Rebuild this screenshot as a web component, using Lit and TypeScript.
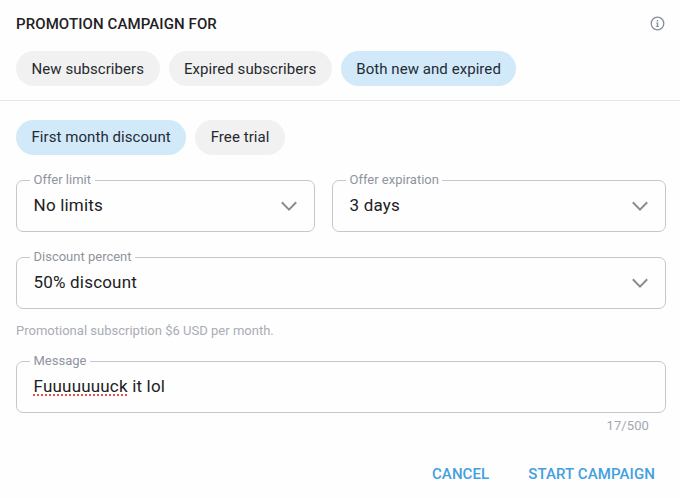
import { LitElement, html, css, svg, nothing } from "lit";
import { customElement, property } from "lit/decorators.js";

@customElement("choice-chip")
class ChoiceChip extends LitElement {
  @property({ type: Boolean, reflect: true }) selected = false;

  static styles = css`
    :host {
      display: flex;
      align-items: center;
      height: 35px;
      padding: 0 15.5px;
      border-radius: 18px;
      background: #f1f1f2;
      color: #26292d;
      font-size: 15px;
      letter-spacing: 0.06px;
      white-space: nowrap;
    }
    :host([selected]) {
      background: #d2e9f9;
      color: #1f2b36;
    }
  `;

  render() {
    return html`<slot></slot>`;
  }
}

@customElement("outlined-field")
class OutlinedField extends LitElement {
  @property() label = "";
  @property({ type: Boolean }) select = false;

  static styles = css`
    :host {
      display: block;
      position: relative;
      min-width: 0;
    }
    .box {
      box-sizing: border-box;
      height: 52px;
      display: flex;
      align-items: center;
      justify-content: space-between;
      padding: 0 16px 3px 16.6px;
      border: 1px solid #c4c8cd;
      border-radius: 7px;
      font-size: 17px;
      letter-spacing: 0.18px;
      color: #202124;
    }
    .label {
      position: absolute;
      top: -9px;
      left: 14px;
      padding: 0 3.5px;
      background: #fefefe;
      color: #8f949e;
      font-size: 13px;
      line-height: 18px;
    }
    .arrow {
      width: 18px;
      height: 12px;
      margin-top: 3px;
    }
  `;

  render() {
    return html`
      <div class="box">
        <slot></slot>
        ${this.select
          ? html`<svg class="arrow" viewBox="0 0 18 12">
              ${svg`<path d="M1.8 2.2 9 9.6 16.2 2.2" fill="none" stroke="#858c94" stroke-width="2" />`}
            </svg>`
          : nothing}
      </div>
      <span class="label">${this.label}</span>
    `;
  }
}

@customElement("app-root")
class AppRoot extends LitElement {
  static styles = css`
    :host {
      display: block;
      box-sizing: border-box;
      height: 498px;
      background: #fefefe;
      font-family: Roboto, "Liberation Sans", sans-serif;
      overflow: hidden;
    }
    .top {
      box-sizing: border-box;
      height: 101px;
      padding: 14px 15px 0 16px;
      border-bottom: 1px solid #e4e5e7;
    }
    .heading {
      display: flex;
      align-items: center;
      justify-content: space-between;
      height: 20px;
      margin-bottom: 17px;
    }
    .title {
      margin: 0;
      font-size: 15px;
      font-weight: 500;
      line-height: 20px;
      letter-spacing: 0.1px;
      color: #1f2124;
    }
    .info {
      width: 15px;
      height: 15px;
      position: relative;
      top: -1px;
    }
    .chips {
      display: flex;
      gap: 9px;
    }
    .body {
      padding: 19px 14px 0 16px;
    }
    .body choice-chip {
      box-sizing: border-box;
      padding-bottom: 1px;
    }
    .pair {
      display: grid;
      grid-template-columns: 299px 334px;
      gap: 17px;
      margin: 25px 0;
    }
    .hint {
      margin: 12px 0 20px;
      font-size: 13px;
      line-height: 20px;
      letter-spacing: 0.01px;
      color: #a9adb5;
    }
    .counter {
      margin: 3px 17px 0 0;
      text-align: right;
      font-size: 13px;
      line-height: 20px;
      letter-spacing: 0.1px;
      color: #a4a8b0;
    }
    .typo {
      text-decoration: underline dotted #e8544c 2px;
      text-decoration-skip-ink: none;
      text-underline-offset: 3px;
    }
    .actions {
      display: flex;
      justify-content: flex-end;
      gap: 39px;
      padding: 28px 11px 0 0;
      color: #43a0e0;
      font-size: 15px;
      font-weight: 500;
      line-height: 20px;
      letter-spacing: 0.1px;
    }
  `;

  render() {
    return html`
      <section class="top">
        <div class="heading">
          <h1 class="title">PROMOTION CAMPAIGN FOR</h1>
          <svg class="info" viewBox="0 0 15 15">
            <circle cx="7.5" cy="7.5" r="6.3" fill="none" stroke="#858d98" stroke-width="1.3" />
            <path d="M6.8 4H8.2V5.4H6.8ZM6.3 6.4H8.2V10H8.8V11H6.2V10H6.8V7.4H6.3Z" fill="#858d98" />
          </svg>
        </div>
        <div class="chips">
          <choice-chip>New subscribers</choice-chip>
          <choice-chip>Expired subscribers</choice-chip>
          <choice-chip selected>Both new and expired</choice-chip>
        </div>
      </section>
      <section class="body">
        <div class="chips">
          <choice-chip selected>First month discount</choice-chip>
          <choice-chip>Free trial</choice-chip>
        </div>
        <div class="pair">
          <outlined-field label="Offer limit" select>No limits</outlined-field>
          <outlined-field label="Offer expiration" select>3 days</outlined-field>
        </div>
        <outlined-field label="Discount percent" select>50% discount</outlined-field>
        <p class="hint">Promotional subscription $6 USD per month.</p>
        <outlined-field label="Message"><span><span class="typo">Fuuuuuuuck</span> it lol</span></outlined-field>
        <div class="counter">17/500</div>
        <div class="actions">
          <span>CANCEL</span>
          <span>START CAMPAIGN</span>
        </div>
      </section>
    `;
  }
}
